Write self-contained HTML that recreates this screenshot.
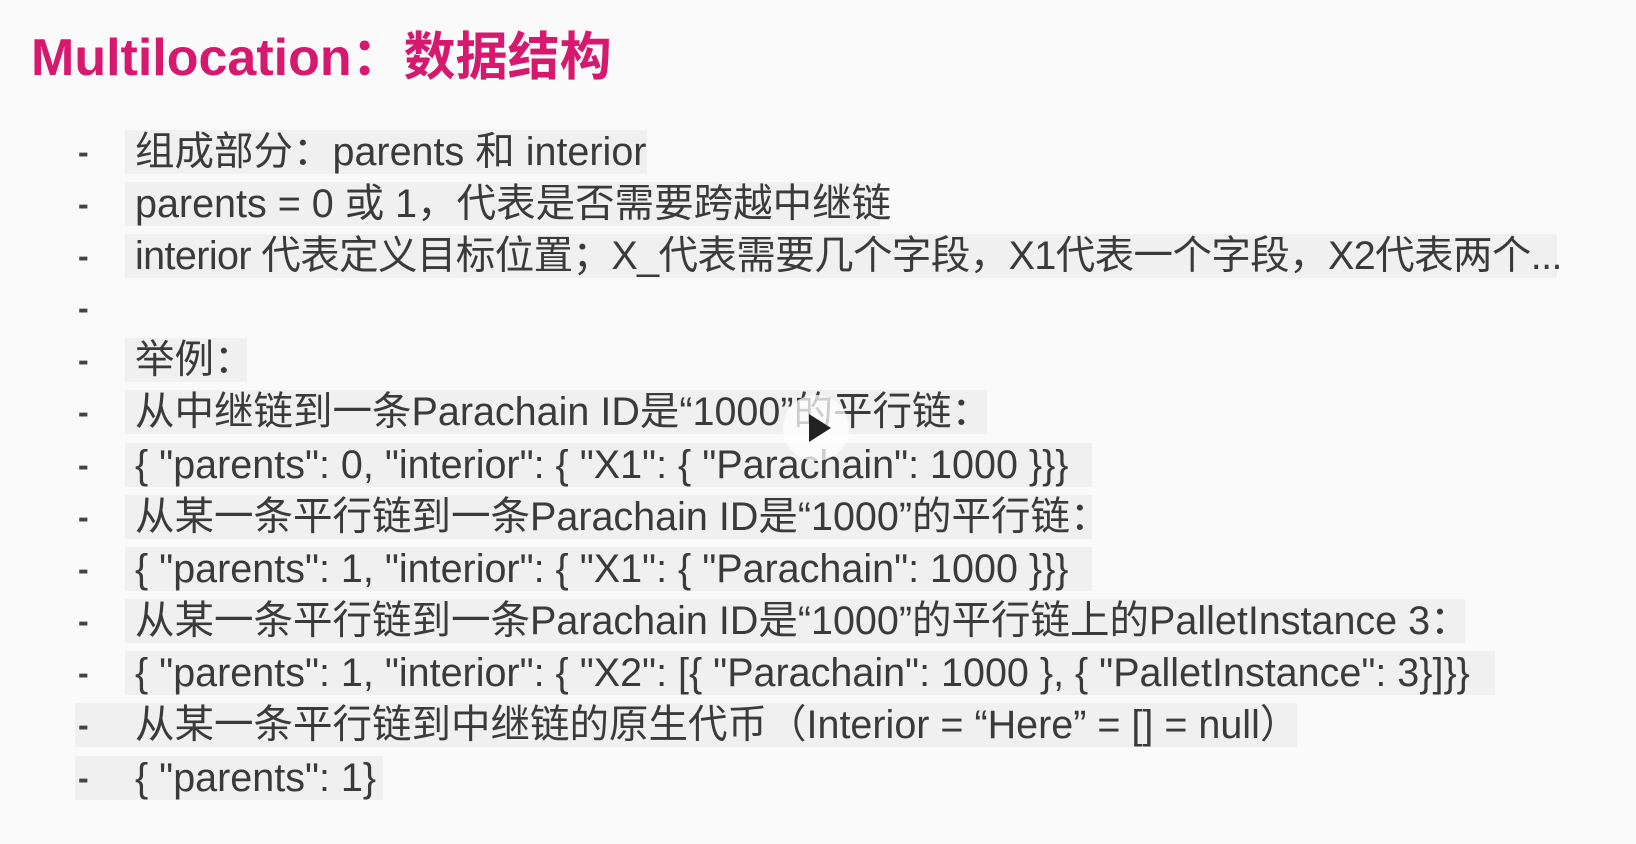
<!DOCTYPE html>
<html><head><meta charset="utf-8"><style>
body{margin:0;width:1636px;height:844px;background:#fafafa;overflow:hidden;position:relative;font-family:"Liberation Sans","Noto Sans CJK SC",sans-serif;color:#3a3a3a}
.t{position:absolute;left:31px;top:15px;font-size:52px;font-weight:bold;color:#d6186e;white-space:nowrap}
.r{position:absolute;height:44px;line-height:44px;font-size:39.5px;white-space:nowrap;letter-spacing:0px}
.d{position:absolute;left:78px;font-size:32px;height:44px;line-height:44px;font-weight:bold;color:#444}
.bg{position:absolute;background:#f0f0f0;height:44px}
.play{position:absolute;left:783px;top:395px;width:66px;height:66px;border-radius:50%;background:rgba(255,255,255,.75)}
.play:after{content:"";position:absolute;left:26px;top:19px;border-left:22px solid #222;border-top:14px solid transparent;border-bottom:14px solid transparent}
</style></head><body>
<div class="t">Multilocation：数据结构</div>

<div class="bg" style="left:125px;top:130px;width:522px"></div>
<div class="bg" style="left:125px;top:182px;width:755px"></div>
<div class="bg" style="left:125px;top:234px;width:1432px"></div>
<div class="bg" style="left:125px;top:338px;width:122px"></div>
<div class="bg" style="left:125px;top:390px;width:862px"></div>
<div class="bg" style="left:125px;top:443px;width:967px"></div>
<div class="bg" style="left:125px;top:495px;width:967px"></div>
<div class="bg" style="left:125px;top:547px;width:967px"></div>
<div class="bg" style="left:125px;top:599px;width:1340px"></div>
<div class="bg" style="left:125px;top:651px;width:1370px"></div>
<div class="bg" style="left:75px;top:703px;width:1222px"></div>
<div class="bg" style="left:75px;top:756px;width:308px"></div>

<div class="d" style="top:130px">-</div><div class="r" style="left:135px;top:130px">组成部分：parents 和 interior</div>
<div class="d" style="top:182px">-</div><div class="r" style="left:135px;top:182px">parents = 0 或 1，代表是否需要跨越中继链</div>
<div class="d" style="top:234px">-</div><div class="r" style="left:135px;top:234px;letter-spacing:-0.6px">interior 代表定义目标位置；X_代表需要几个字段，X1代表一个字段，X2代表两个...</div>
<div class="d" style="top:286px">-</div>
<div class="d" style="top:338px">-</div><div class="r" style="left:135px;top:338px">举例：</div>
<div class="d" style="top:390px">-</div><div class="r" style="left:135px;top:390px">从中继链到一条Parachain ID是“1000”的平行链：</div>
<div class="d" style="top:443px">-</div><div class="r" style="left:135px;top:443px">{ "parents": 0, "interior": { "X1": { "Parachain": 1000 }}}</div>
<div class="d" style="top:495px">-</div><div class="r" style="left:135px;top:495px">从某一条平行链到一条Parachain ID是“1000”的平行链：</div>
<div class="d" style="top:547px">-</div><div class="r" style="left:135px;top:547px">{ "parents": 1, "interior": { "X1": { "Parachain": 1000 }}}</div>
<div class="d" style="top:599px">-</div><div class="r" style="left:135px;top:599px">从某一条平行链到一条Parachain ID是“1000”的平行链上的PalletInstance 3：</div>
<div class="d" style="top:651px">-</div><div class="r" style="left:135px;top:651px">{ "parents": 1, "interior": { "X2":  [{ "Parachain": 1000 }, { "PalletInstance": 3}]}}</div>
<div class="d" style="top:703px">-</div><div class="r" style="left:135px;top:703px">从某一条平行链到中继链的原生代币（Interior = “Here” = [] = null）</div>
<div class="d" style="top:756px">-</div><div class="r" style="left:135px;top:756px">{ "parents": 1}</div>

<div class="play"></div>
</body></html>
